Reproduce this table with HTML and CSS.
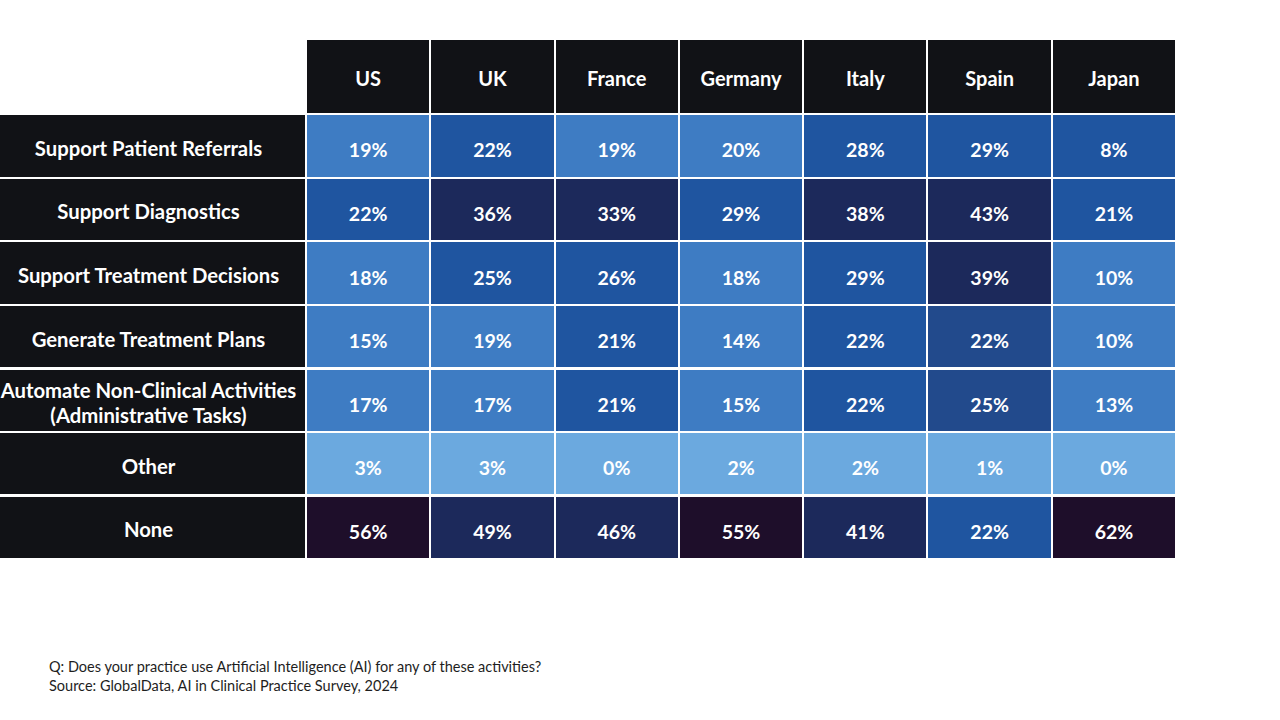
FILE: index.html
```html
<!DOCTYPE html>
<html lang="en">
<head>
<meta charset="utf-8">
<title>AI in Clinical Practice</title>
<link rel="stylesheet" href="styles.css">
</head>
<body>
<main class="page">
  <div class="heat">
    <div class="corner"></div>
    <div class="head">US</div>
    <div class="head">UK</div>
    <div class="head">France</div>
    <div class="head">Germany</div>
    <div class="head">Italy</div>
    <div class="head">Spain</div>
    <div class="head">Japan</div>

    <div class="label">Support Patient Referrals</div>
    <div class="cell l2">19%</div>
    <div class="cell l3">22%</div>
    <div class="cell l2">19%</div>
    <div class="cell l2">20%</div>
    <div class="cell l3">28%</div>
    <div class="cell l3">29%</div>
    <div class="cell l3">8%</div>

    <div class="label">Support Diagnostics</div>
    <div class="cell l3">22%</div>
    <div class="cell l4">36%</div>
    <div class="cell l4">33%</div>
    <div class="cell l3">29%</div>
    <div class="cell l4">38%</div>
    <div class="cell l4">43%</div>
    <div class="cell l3">21%</div>

    <div class="label">Support Treatment Decisions</div>
    <div class="cell l2">18%</div>
    <div class="cell l3">25%</div>
    <div class="cell l3">26%</div>
    <div class="cell l2">18%</div>
    <div class="cell l3">29%</div>
    <div class="cell l4">39%</div>
    <div class="cell l2">10%</div>

    <div class="label">Generate Treatment Plans</div>
    <div class="cell l2">15%</div>
    <div class="cell l2">19%</div>
    <div class="cell l3">21%</div>
    <div class="cell l2">14%</div>
    <div class="cell l3">22%</div>
    <div class="cell l3b">22%</div>
    <div class="cell l2">10%</div>

    <div class="label">Automate Non-Clinical Activities<br>(Administrative Tasks)</div>
    <div class="cell l2">17%</div>
    <div class="cell l2">17%</div>
    <div class="cell l3">21%</div>
    <div class="cell l2">15%</div>
    <div class="cell l3">22%</div>
    <div class="cell l3b">25%</div>
    <div class="cell l2">13%</div>

    <div class="label">Other</div>
    <div class="cell l1">3%</div>
    <div class="cell l1">3%</div>
    <div class="cell l1">0%</div>
    <div class="cell l1">2%</div>
    <div class="cell l1">2%</div>
    <div class="cell l1">1%</div>
    <div class="cell l1">0%</div>

    <div class="label">None</div>
    <div class="cell l5">56%</div>
    <div class="cell l4">49%</div>
    <div class="cell l4">46%</div>
    <div class="cell l5">55%</div>
    <div class="cell l4">41%</div>
    <div class="cell l3">22%</div>
    <div class="cell l5">62%</div>
  </div>

  <footer class="notes">
    <p>Q: Does your practice use Artificial Intelligence (AI) for any of these activities?</p>
    <p>Source: GlobalData, AI in Clinical Practice Survey, 2024</p>
  </footer>
</main>
</body>
</html>
```

FILE: styles.css
```css
* {
  box-sizing: border-box;
}

html, body {
  margin: 0;
  padding: 0;
  background: #ffffff;
}

body {
  width: 1280px;
  height: 720px;
  overflow: hidden;
  font-family: Lato, "Open Sans", "Liberation Sans", sans-serif;
}

.page {
  padding-top: 40px;
}

.heat {
  display: grid;
  grid-template-columns: 305px repeat(7, 122.3px);
  grid-template-rows: 73px repeat(7, 61.4px);
  column-gap: 2px;
  row-gap: 2.2px;
  width: 1175px;
}

.corner {
  background: transparent;
}

.head,
.label,
.cell {
  display: flex;
  align-items: center;
  justify-content: center;
  text-align: center;
  color: #ffffff;
  font-weight: 700;
}

.head {
  background: #111216;
  font-size: 20px;
  padding-top: 3px;
}

.label {
  background: #111216;
  font-size: 20.3px;
  line-height: 25px;
  padding-top: 5px;
  padding-right: 8px;
}

.cell {
  font-size: 19.5px;
  padding-top: 8px;
}

.l1 { background: #6ba9df; }
.l2 { background: #3e7cc3; }
.l3 { background: #1f55a0; }
.l3b { background: #224a8c; }
.l4 { background: #1c295b; }
.l5 { background: #1e0e2a; }

.notes {
  margin-top: 99px;
  padding-left: 49px;
  font-size: 14.5px;
  line-height: 19px;
  color: #1e1e1e;
}

.notes p {
  margin: 0;
}
```
